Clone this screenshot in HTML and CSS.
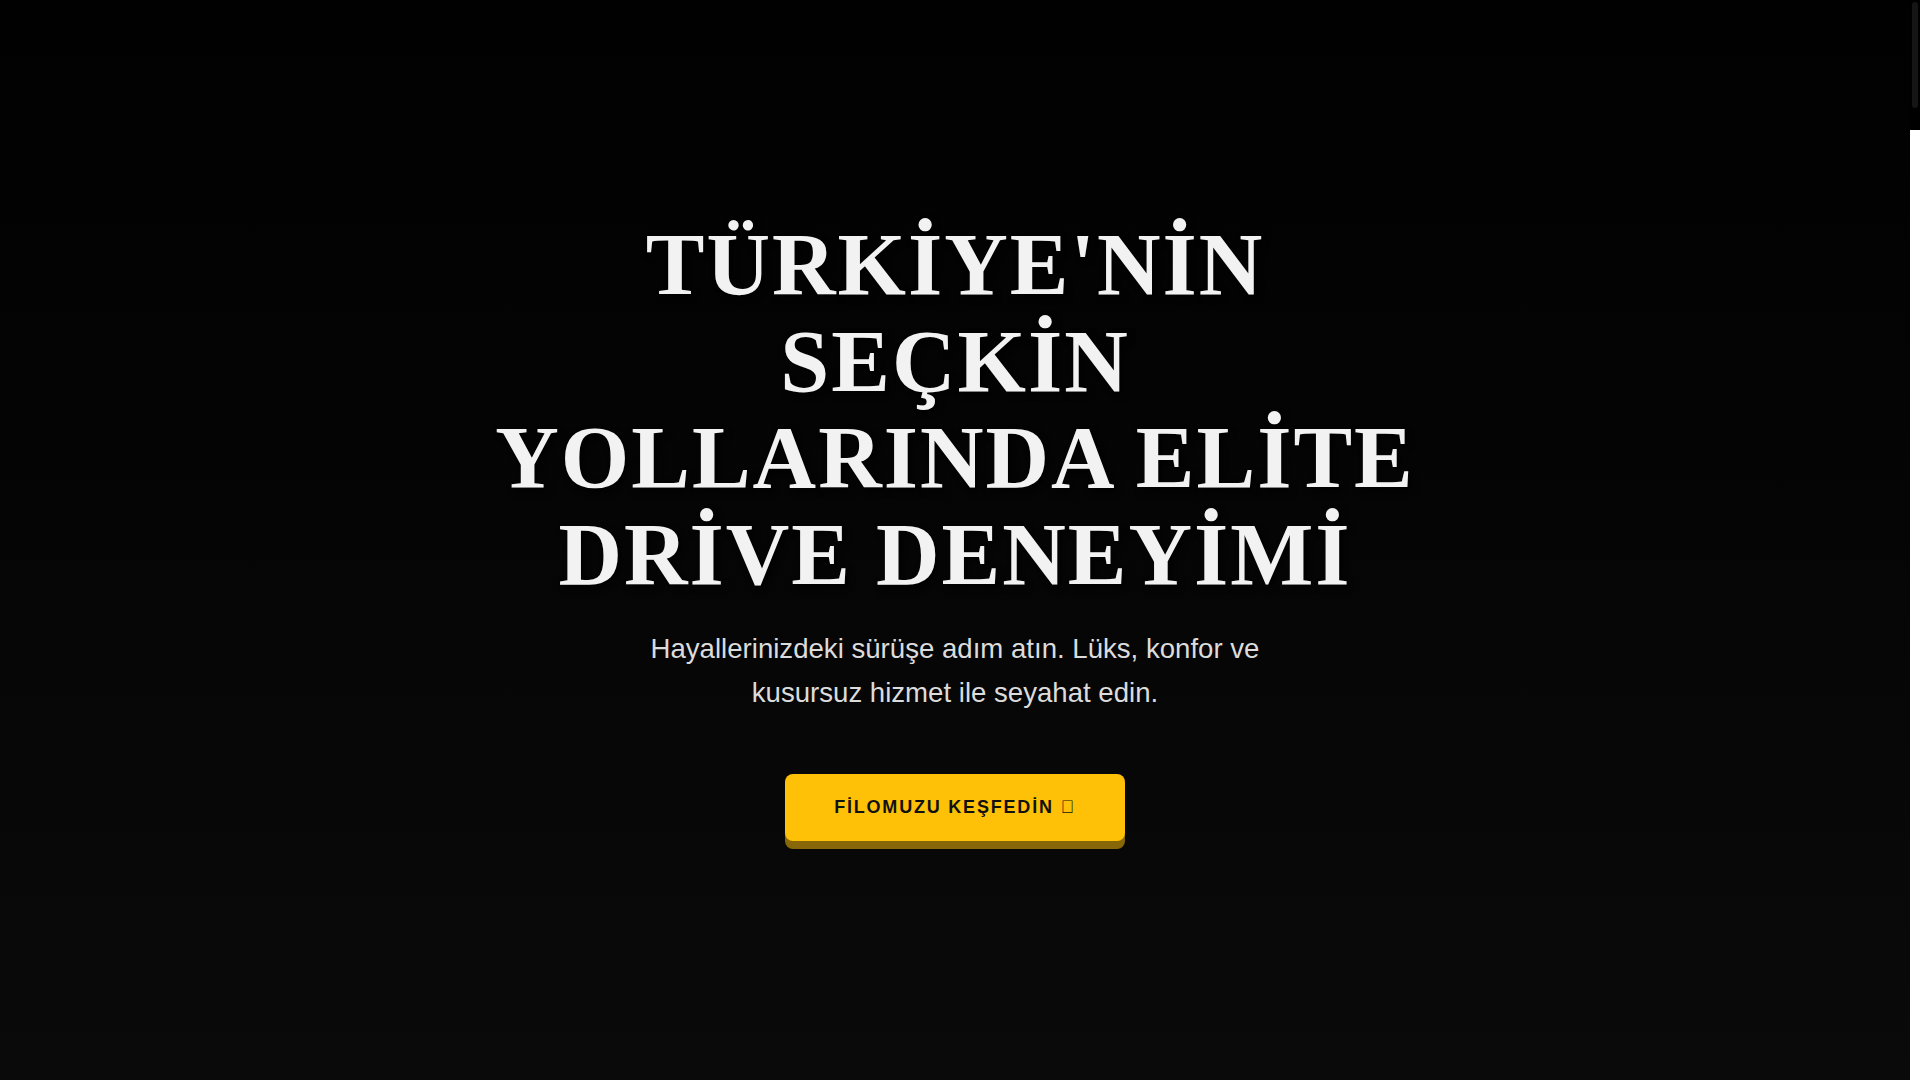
FILE: index.html
```html
<!DOCTYPE html>
<html lang="tr">
<head>
<meta charset="utf-8">
<title>Elite Drive</title>
<link rel="stylesheet" href="styles.css">
</head>
<body>
<div class="page">
  <section class="hero">
    <div class="hero-content">
      <h1 class="hero-title">TÜRKİYE'NİN SEÇKİN YOLLARINDA ELİTE DRİVE DENEYİMİ</h1>
      <p class="hero-text">Hayallerinizdeki sürüşe adım atın. Lüks, konfor ve kusursuz hizmet ile seyahat edin.</p>
      <a class="hero-btn" href="#filo">FİLOMUZU KEŞFEDİN &#xf061;</a>
    </div>
  </section>
  <section class="rest" id="filo"></section>
</div>
<div class="scrollbar">
  <div class="scrollbar-thumb-area">
    <div class="scrollbar-thumb"></div>
  </div>
</div>
</body>
</html>
```

FILE: styles.css
```css
html {
  background: #ffffff;
  scrollbar-width: none;
}
::-webkit-scrollbar {
  display: none;
}
body {
  margin: 0;
  font-family: "Liberation Sans", Arial, sans-serif;
}
.page {
  margin-right: 10px;
  background: #060606;
}
.hero {
  height: 100vh;
  display: flex;
  align-items: center;
  justify-content: center;
  box-sizing: border-box;
  padding-bottom: 22px;
  background: linear-gradient(to bottom, #010101 0%, #050505 50%, #0a0a0a 100%);
  text-align: center;
}
.hero-content {
  display: flex;
  flex-direction: column;
  align-items: center;
}
.hero-title {
  margin: 0 0 23px;
  max-width: 960px;
  font-family: "Liberation Serif", "Times New Roman", serif;
  font-weight: 700;
  font-size: 88px;
  line-height: 1.1;
  letter-spacing: 2px;
  color: #f2f2f2;
  text-shadow: 3px 3px 6px rgba(0, 0, 0, 0.9);
}
.hero-text {
  margin: 0 0 60px;
  max-width: 680px;
  font-size: 27.6px;
  line-height: 1.58;
  color: #dcdcdc;
}
.hero-btn {
  display: inline-block;
  padding: 23px 49px;
  background: #ffc107;
  color: #111111;
  font-weight: 700;
  font-size: 18px;
  letter-spacing: 1.8px;
  text-decoration: none;
  border-radius: 8px;
  box-shadow: 0 8px 0 #876707;
}
.rest {
  height: 7200px;
  background: #0a0a0a;
}
.scrollbar {
  position: fixed;
  top: 0;
  right: 0;
  width: 10px;
  height: 100vh;
  background: #ffffff;
}
.scrollbar-thumb-area {
  height: 130px;
  background: #000000;
  padding: 2px 2px 0;
  box-sizing: border-box;
}
.scrollbar-thumb {
  height: 106px;
  background: #151515;
  border-radius: 3px;
}
```
